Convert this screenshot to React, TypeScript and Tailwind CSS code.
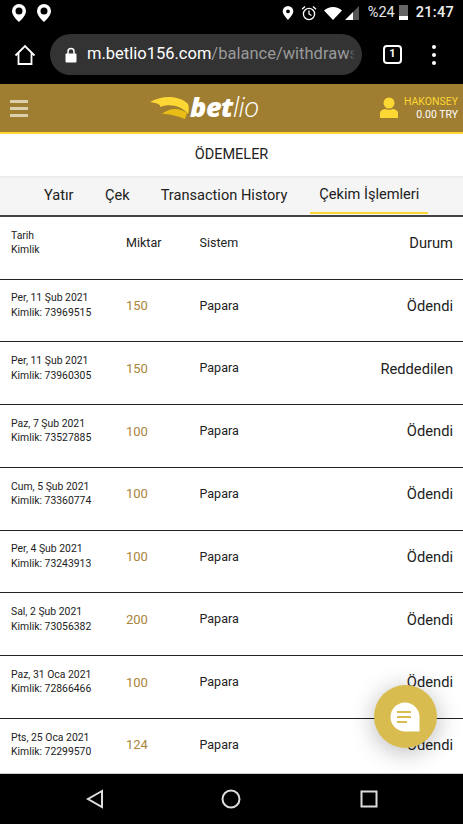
const rows = [
  { date: "Per, 11 Şub 2021", id: "73969515", amount: "150", status: "Ödendi" },
  { date: "Per, 11 Şub 2021", id: "73960305", amount: "150", status: "Reddedilen" },
  { date: "Paz, 7 Şub 2021", id: "73527885", amount: "100", status: "Ödendi" },
  { date: "Cum, 5 Şub 2021", id: "73360774", amount: "100", status: "Ödendi" },
  { date: "Per, 4 Şub 2021", id: "73243913", amount: "100", status: "Ödendi" },
  { date: "Sal, 2 Şub 2021", id: "73056382", amount: "200", status: "Ödendi" },
  { date: "Paz, 31 Oca 2021", id: "72866466", amount: "100", status: "Ödendi" },
  { date: "Pts, 25 Oca 2021", id: "72299570", amount: "124", status: "Ödendi" },
];

function Pin() {
  return (
    <svg width="16" height="20" viewBox="0 0 16 20">
      <path
        fillRule="evenodd"
        fill="#fff"
        d="M8 1a7 7 0 0 0-7 7c0 4.6 4.6 8.6 7 11 2.4-2.4 7-6.400 7-11a7 7 0 0 0-7-7Zm0 3.500a3.500 3.500 0 1 1 0 7 3.500 3.500 0 0 1 0-7Z"
      />
    </svg>
  );
}

function StatusBar() {
  return (
    <div className="flex h-[25px] items-center justify-between bg-black pl-[11px] pr-[9px] text-white">
      <div className="flex items-center gap-[9px]">
        <Pin />
        <Pin />
      </div>
      <div className="flex items-center">
        <svg width="12" height="16" viewBox="0 0 12 16" className="mr-[7px]">
          <path
            fillRule="evenodd"
            fill="#fff"
            d="M6 1a5.300 5.300 0 0 0-5.300 5.300C.7 9.500 4 12.500 6 15c2-2.500 5.300-5.500 5.300-8.700A5.300 5.300 0 0 0 6 1Zm0 3.500a1.900 1.900 0 1 1 0 3.800 1.900 1.900 0 0 1 0-3.800Z"
          />
        </svg>
        <svg width="16" height="16" viewBox="0 0 16 16" fill="none" stroke="#fff" className="mr-[7px]">
          <circle cx="8" cy="9" r="5.600" strokeWidth="1.300" />
          <path d="M8 5.500V9l2.500 1.500M1 4.200 4 1.500M15 4.200l-3-2.700" strokeWidth="1.300" />
        </svg>
        <svg width="18" height="14" viewBox="0 0 18 14" className="mr-[3px]">
          <path fill="#fff" d="M0 4.500C2.500 2.300 5.500 1 9 1s6.500 1.300 9 3.500L9 14Z" />
        </svg>
        <svg width="14" height="14" viewBox="0 0 14 14" className="mr-[9px]">
          <path fill="#555" d="M14 0v14H8V6Z" />
          <path fill="#fff" d="M8 6v8H0Z" />
        </svg>
        <span className="mr-[4px] font-['Roboto',sans-serif] text-[14.500px] text-[#e6e6e6]">%24</span>
        <div className="mr-[8px] flex h-[15px] w-[9px] flex-col justify-end bg-[#666]">
          <div className="h-[4px] bg-white" />
        </div>
        <span className="font-['Roboto',sans-serif] text-[14.500px] font-medium tracking-[0.3px] text-[#eee]">21:47</span>
      </div>
    </div>
  );
}

function BrowserBar() {
  return (
    <div className="flex h-[59px] items-center bg-black">
      <div className="flex w-[50px] justify-center">
        <svg width="22" height="22" viewBox="0 0 22 22" fill="none" stroke="#fff" strokeWidth="1.800">
          <path d="M1.500 11.500 11 2l9.500 9.500M4.500 9v11h13V9" />
        </svg>
      </div>
      <div className="relative flex h-[41px] w-[312px] items-center overflow-hidden rounded-full bg-[#333] pl-[15px] pr-[7px]">
        <svg width="12" height="16" viewBox="0 0 12 16" className="mr-[10px] shrink-0">
          <path fill="none" stroke="#fff" strokeWidth="1.500" d="M3 7V4.500a3 3 0 0 1 6 0V7" />
          <rect x="0.500" y="6.500" width="11" height="9" rx="1" fill="#fff" />
        </svg>
        <div className="overflow-hidden whitespace-nowrap font-['Roboto',sans-serif] text-[16.500px] text-white">
          m.betlio156.com<span className="text-[#9a9a9a]">/balance/withdraws</span>
        </div>
        <div className="absolute bottom-0 right-[7px] top-0 w-[8px] bg-gradient-to-r from-transparent to-[#333]" />
      </div>
      <div className="flex flex-1 items-center justify-between pl-[21px] pr-[27px]">
        <div className="flex h-[19px] w-[19px] items-center justify-center rounded-[4px] border-2 border-white font-['Roboto',sans-serif] text-[11px] font-bold text-white">
          1
        </div>
        <div className="flex flex-col gap-[4px]">
          <div className="h-[4px] w-[4px] rounded-full bg-white" />
          <div className="h-[4px] w-[4px] rounded-full bg-white" />
          <div className="h-[4px] w-[4px] rounded-full bg-white" />
        </div>
      </div>
    </div>
  );
}

function Header() {
  return (
    <div className="relative flex h-[50px] items-center justify-between border-b-2 border-[#fdd835] bg-[#9f7d31] pl-[10px] pr-[5px]">
      <div className="flex w-[18px] flex-col gap-[4px]">
        <div className="h-[3px] bg-[#dccfae]" />
        <div className="h-[3px] bg-[#dccfae]" />
        <div className="h-[3px] bg-[#dccfae]" />
      </div>
      <div className="absolute left-[150px] top-[10px] flex items-center">
        <svg width="42" height="28" viewBox="0 0 42 28">
          <path fill="#fdd835" d="M0 8C10 2 28 0 38 10c1 2 1 6 0 10C32 12 20 9 10 13 11 11 8 9 0 8Z" />
          <path fill="#e8bd16" d="M12 20C20 13 30 14 37 19l-2 6C28 22 20 20 12 20Z" />
        </svg>
        <div className="ml-[-2px] mt-[-3px] flex items-baseline font-['Open_Sans',sans-serif] text-[27px] italic leading-none text-white">
          <span className="font-extrabold tracking-[-0.5px]">bet</span>
          <span className="font-light tracking-[-0.5px]">lio</span>
        </div>
      </div>
      <div className="flex items-center">
        <svg width="18" height="22" viewBox="0 0 18 22" className="mr-[6px]">
          <circle cx="9" cy="6" r="5.500" fill="#fdd835" />
          <path fill="#fdd835" d="M0 21v-5c0-2 2-3.500 5-4 2 1 6 1 8 0 3 .5 5 2 5 4v5Z" />
        </svg>
        <div className="flex flex-col items-end font-['Roboto',sans-serif] text-[10.500px] leading-[13px]">
          <span className="text-[#fdd835]">HAKONSEY</span>
          <span className="text-white">0.00 TRY</span>
        </div>
      </div>
    </div>
  );
}

function Tabs() {
  const base = "flex items-center font-['Roboto',sans-serif] text-[14.600px] text-[#212121]";
  return (
    <div className="flex h-[41px] items-stretch border-y-2 border-t-[#ececec] border-b-[#444] bg-[#f5f5f5] pb-[1px] pl-[44px]">
      <div className={`${base} mr-[31.500px]`}>Yatır</div>
      <div className={`${base} mr-[31px]`}>Çek</div>
      <div className={`${base} mr-[23px]`}>Transaction History</div>
      <div className={`${base} border-b-2 border-[#fdd835] px-[9px]`}>Çekim İşlemleri</div>
    </div>
  );
}

const rowGrid =
  "grid grid-cols-[115px_73.500px_1fr_auto] items-center border-b border-[#222] pb-[9px] pl-[11px] pr-[10px] font-['Roboto',sans-serif] text-[#222]";

function Row({ date, id, amount, status }: { date: string; id: string; amount: string; status: string }) {
  return (
    <div className={`${rowGrid} h-[62.750px]`}>
      <div className="text-[10.400px] leading-[14.500px]">
        <div>{date}</div>
        <div>Kimlik: {id}</div>
      </div>
      <div className="text-[13px] text-[#a9853a]">{amount}</div>
      <div className="text-[12.500px]">Papara</div>
      <div className="text-[14.700px]">{status}</div>
    </div>
  );
}

export default function App() {
  return (
    <div className="relative flex h-[824px] w-[463px] flex-col overflow-hidden bg-white">
      <StatusBar />
      <BrowserBar />
      <Header />
      <div className="flex h-[42px] items-center justify-center font-['Roboto',sans-serif] text-[14.500px] text-[#222]">
        ÖDEMELER
      </div>
      <Tabs />
      <div className="min-h-0 flex-1 overflow-hidden">
        <div className={`${rowGrid} h-[62.500px]`}>
          <div className="text-[10.400px] leading-[14.500px]">
            <div>Tarih</div>
            <div>Kimlik</div>
          </div>
          <div className="text-[12.500px]">Miktar</div>
          <div className="text-[12.500px]">Sistem</div>
          <div className="text-[14.700px]">Durum</div>
        </div>
        {rows.map((r) => (
          <Row key={r.id} {...r} />
        ))}
      </div>
      <div className="flex h-[51px] shrink-0 items-center border-t border-[#ccc] bg-black">
        <div className="flex w-[190px] justify-center">
          <svg width="20" height="20" viewBox="0 0 20 20" fill="none" stroke="#ddd" strokeWidth="2">
            <path d="M17 2 3 10l14 8Z" />
          </svg>
        </div>
        <svg width="20" height="20" viewBox="0 0 20 20" fill="none" stroke="#ddd" strokeWidth="2" className="ml-[31px]">
          <circle cx="10" cy="10" r="8.500" />
        </svg>
        <svg width="18" height="18" viewBox="0 0 18 18" fill="none" stroke="#ddd" strokeWidth="2" className="ml-[119px]">
          <rect x="1.500" y="1.500" width="15" height="15" />
        </svg>
      </div>
      <div className="absolute left-[374px] top-[685px] flex h-[63px] w-[63px] items-center justify-center rounded-full bg-[#d9bc4f] shadow-[0_4px_24px_rgba(0,0,0,0.28)]">
        <svg width="30" height="30" viewBox="0 0 30 30" className="ml-[-1px]">
          <path fill="#fff" d="M15 .5C23 .5 29.500 7 29.500 15v14.500H15C7 29.500.5 23 .5 15S7 .5 15 .5Z" />
          <path stroke="#d9bc4f" strokeWidth="2" d="M7 10h14M7 15h14M7 20h10" />
        </svg>
      </div>
    </div>
  );
}
